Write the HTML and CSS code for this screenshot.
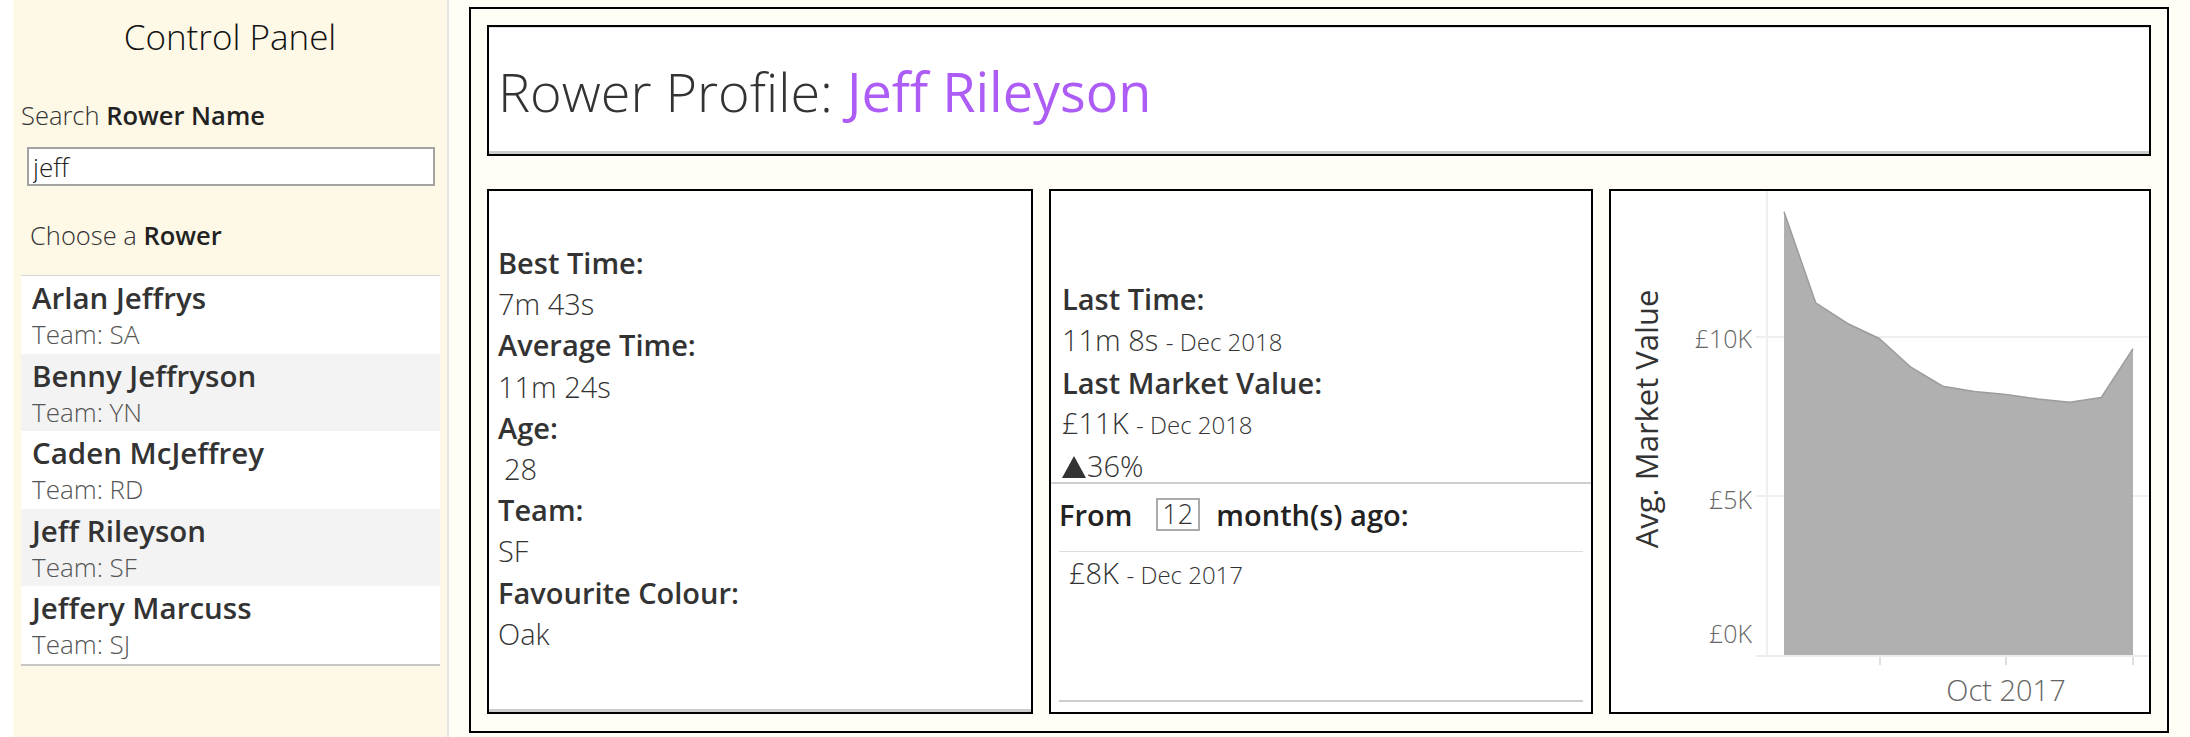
FILE: index.html
```html
<!DOCTYPE html>
<html>
<head>
    <title>Rower Profile</title>
    <link rel="stylesheet" href="styles.css">
</head>
<body>
    <div class="sidebar">
        <h2 class="panel-title">Control Panel</h2>
        <div class="label">Search <b>Rower Name</b></div>
        <input class="search" type="text" value="jeff">
        <div class="label choose">Choose a <b>Rower</b></div>
        <ul class="rower-list">
            <li><span class="name">Arlan Jeffrys</span><span class="team">Team: SA</span></li>
            <li class="alt"><span class="name">Benny Jeffryson</span><span class="team">Team: YN</span></li>
            <li><span class="name">Caden McJeffrey</span><span class="team">Team: RD</span></li>
            <li class="alt"><span class="name">Jeff Rileyson</span><span class="team">Team: SF</span></li>
            <li><span class="name">Jeffery Marcuss</span><span class="team">Team: SJ</span></li>
        </ul>
    </div>

    <div class="main">
        <div class="frame">
            <div class="header">
                <h1>Rower Profile: <span class="who">Jeff Rileyson</span></h1>
            </div>

            <div class="panels">
                <div class="panel details">
                    <div class="key">Best Time:</div>
                    <div class="val">7m 43s</div>
                    <div class="key">Average Time:</div>
                    <div class="val">11m 24s</div>
                    <div class="key">Age:</div>
                    <div class="val indent">28</div>
                    <div class="key">Team:</div>
                    <div class="val">SF</div>
                    <div class="key">Favourite Colour:</div>
                    <div class="val">Oak</div>
                </div>

                <div class="panel market">
                    <div class="latest">
                        <div class="key">Last Time:</div>
                        <div class="val">11m 8s <small>- Dec 2018</small></div>
                        <div class="key">Last Market Value:</div>
                        <div class="val">£11K <small>- Dec 2018</small></div>
                        <div class="val"><svg class="arrow" width="24" height="22" viewBox="0 0 24 22"><path d="M12,0 L24,22 L0,22 Z" fill="#333"/></svg>36%</div>
                    </div>
                    <div class="history">
                        <div class="from-row">
                            <span class="key">From</span>
                            <span class="num-box">12</span>
                            <span class="key">month(s) ago:</span>
                        </div>
                        <div class="past val">£8K <small>- Dec 2017</small></div>
                        <div class="end-line"></div>
                    </div>
                </div>

                <div class="panel chart">
                    <svg width="538" height="521" viewBox="0 0 538 521">
                        <line x1="156" y1="0" x2="156" y2="464" stroke="#efefef" stroke-width="2"/>
                        <line x1="145" y1="146" x2="538" y2="146" stroke="#efefef" stroke-width="2"/>
                        <line x1="145" y1="305" x2="538" y2="305" stroke="#efefef" stroke-width="2"/>
                        <line x1="145" y1="465" x2="538" y2="465" stroke="#ececec" stroke-width="2"/>
                        <path d="M173,464 L173,20.7 L204.7,111.8 L236.5,132.5 L268.2,147.5 L299.9,176.2 L331.7,195.2 L363.4,200.6 L395.1,203.6 L426.8,207.9 L458.6,211.2 L490.3,206.5 L522,157.7 L522,464 Z" fill="#b0b0b0"/>
                        <path d="M173,20.7 L204.7,111.8 L236.5,132.5 L268.2,147.5 L299.9,176.2 L331.7,195.2 L363.4,200.6 L395.1,203.6 L426.8,207.9 L458.6,211.2 L490.3,206.5 L522,157.7" fill="none" stroke="#9c9c9c" stroke-width="1.5"/>
                        <line x1="269" y1="466" x2="269" y2="474" stroke="#e0e0e0" stroke-width="2"/>
                        <line x1="395" y1="466" x2="395" y2="474" stroke="#e0e0e0" stroke-width="2"/>
                        <line x1="522" y1="466" x2="522" y2="474" stroke="#e0e0e0" stroke-width="2"/>
                        <text class="tick" x="141" y="157" text-anchor="end">£10K</text>
                        <text class="tick" x="141" y="318" text-anchor="end">£5K</text>
                        <text class="tick" x="141" y="452" text-anchor="end">£0K</text>
                        <text class="tick wide" x="395" y="510" text-anchor="middle">Oct 2017</text>
                        <text class="axis-title" x="0" y="0" text-anchor="middle" transform="translate(47,228) rotate(-90)">Avg. Market Value</text>
                    </svg>
                </div>
            </div>
        </div>
    </div>
</body>
</html>
```

FILE: styles.css
```css
body {
    margin: 0;
    height: 737px;
    display: flex;
    background-color: #ffffff;
    font-family: "Open Sans", "Noto Sans", sans-serif;
    color: #333;
    overflow: hidden;
}

/* left control panel */
.sidebar {
    margin-left: 13px;
    width: 436px;
    padding: 17px 0 0 8px;
    box-sizing: border-box;
    background-color: #fef8e6;
    border-right: 2px solid #e6e6e6;
}
.panel-title {
    margin: 0;
    padding-right: 8px;
    text-align: center;
    font-size: 35px;
    line-height: 40px;
    font-weight: 300;
    color: #111;
}
.label {
    margin-top: 43px;
    font-size: 25.5px;
    line-height: 30px;
    font-weight: 300;
    color: #333;
}
.label b {
    font-weight: 600;
    color: #222;
}
.search {
    display: block;
    margin: 17px 0 0 6px;
    width: 408px;
    height: 39px;
    box-sizing: border-box;
    border: 2px solid #a3a3a3;
    padding: 0 4px;
    font-family: inherit;
    font-size: 26px;
    font-weight: 300;
    color: #222;
    background: #fff;
    outline: none;
}
.choose {
    margin-top: 34px;
    padding-left: 9px;
}
.rower-list {
    list-style: none;
    margin: 25px 0 0 0;
    padding: 0;
    width: 419px;
    background: #fff;
    border-top: 1px solid #d4d4d4;
    border-bottom: 2px solid #c8c8c8;
}
.rower-list li {
    height: 77.6px;
    box-sizing: border-box;
    padding: 4px 0 0 11px;
}
.rower-list li.alt {
    background-color: #f3f3f3;
}
.rower-list .name {
    display: block;
    font-size: 29.5px;
    line-height: 36px;
    font-weight: 600;
    color: #333;
}
.rower-list .team {
    display: block;
    font-size: 26px;
    line-height: 37.6px;
    font-weight: 300;
    color: #555;
}

/* dashboard */
.main {
    flex: 1;
    background-color: #fffdf6;
    padding: 7px 0 0 20px;
}
.frame {
    width: 1700px;
    box-sizing: border-box;
    border: 2px solid #000;
    padding: 16px 16px 17px 16px;
}
.header {
    height: 131px;
    box-sizing: border-box;
    border: 2px solid #000;
    background: #fff;
    box-shadow: inset 0 -3px 0 #cdcdcd, inset 0 1px 0 #e0e0e0;
    padding: 34px 0 0 9px;
}
.header h1 {
    margin: 0;
    font-size: 54px;
    line-height: 60px;
    font-weight: 300;
    color: #333;
}
.header .who {
    font-weight: 400;
    color: #ad5cf6;
}

.panels {
    margin-top: 33px;
    display: grid;
    grid-template-columns: 546px 544px 542px;
    gap: 16px;
    height: 525px;
}
.panel {
    border: 2px solid #000;
    background: #fff;
    box-sizing: border-box;
}
.key {
    font-size: 29px;
    font-weight: 600;
    color: #333;
}
.val {
    font-size: 29px;
    font-weight: 300;
    color: #333;
}
.val small {
    font-size: 24px;
}
.arrow {
    vertical-align: -1px;
    margin-right: 1px;
}
.details {
    padding: 51px 0 0 9px;
    box-shadow: inset 0 -3px 0 #cdcdcd;
}
.details .key,
.details .val {
    line-height: 41.2px;
}
.details .indent {
    padding-left: 6px;
}

.market {
    display: flex;
    flex-direction: column;
}
.latest {
    height: 293px;
    box-sizing: border-box;
    padding: 88px 0 0 11px;
    border-bottom: 2px solid #cfcfcf;
}
.latest .key,
.latest .val {
    line-height: 40.8px;
}
.history {
    flex: 1;
    display: flex;
    flex-direction: column;
    padding: 0 8px;
}
.from-row {
    display: flex;
    align-items: center;
    height: 46px;
    margin-top: 7px;
    border-bottom: 1px solid #dddddd;
    padding-bottom: 14px;
}
.from-row .key {
    color: #222;
}
.num-box {
    width: 44px;
    height: 33px;
    box-sizing: border-box;
    margin: 0 16px 0 24px;
    border: 2px solid #aaa;
    padding-left: 4px;
    font-size: 27px;
    line-height: 28px;
    font-weight: 300;
    color: #333;
}
.past {
    padding-left: 10px;
    line-height: 42px;
}
.end-line {
    margin-top: auto;
    margin-bottom: 10px;
    border-top: 2px solid #cdcdcd;
}

.chart svg {
    display: block;
}
.tick {
    font-family: "Open Sans", "Noto Sans", sans-serif;
    font-size: 25px;
    font-weight: 300;
    fill: #666;
}
.tick.wide {
    font-size: 29px;
}
.axis-title {
    font-family: "Open Sans", "Noto Sans", sans-serif;
    font-size: 31px;
    font-weight: 400;
    fill: #333;
}
```
